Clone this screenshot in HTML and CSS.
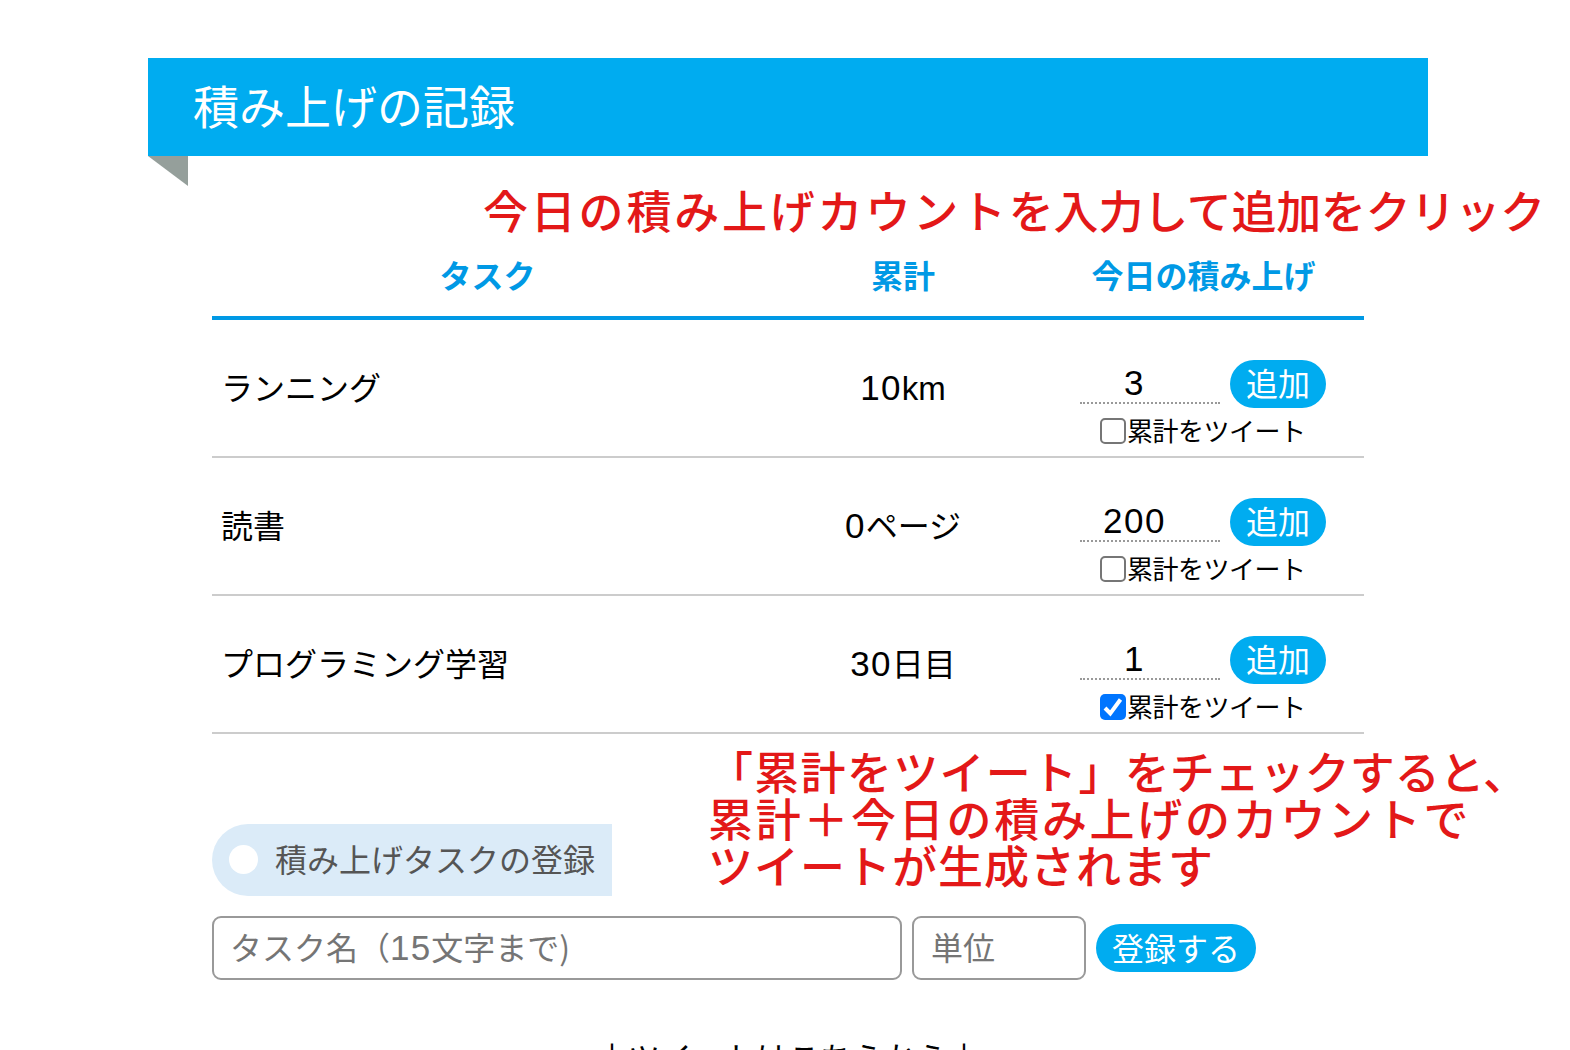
FILE: index.html
```html
<!DOCTYPE html>
<html lang="ja">
<head>
<meta charset="utf-8">
<title>積み上げの記録</title>
<link rel="stylesheet" href="styles.css">
</head>
<body>
<main class="page">
  <h1 class="banner">積み上げの記録</h1>
  <div class="content">
    <table class="tasks">
      <thead>
        <tr><th class="col-task">タスク</th><th class="col-total">累計</th><th class="col-today">今日の積み上げ</th></tr>
      </thead>
      <tbody>
        <tr>
          <td class="name">ランニング</td>
          <td class="total"><span class="num">10</span><span class="unit">km</span></td>
          <td class="today">
            <div class="entry"><input class="count" type="text" value="3"><button class="btn">追加</button></div>
            <label class="tweet"><input class="check" type="checkbox">累計をツイート</label>
          </td>
        </tr>
        <tr>
          <td class="name">読書</td>
          <td class="total"><span class="num">0</span>ページ</td>
          <td class="today">
            <div class="entry"><input class="count" type="text" value="200"><button class="btn">追加</button></div>
            <label class="tweet"><input class="check" type="checkbox">累計をツイート</label>
          </td>
        </tr>
        <tr>
          <td class="name">プログラミング学習</td>
          <td class="total"><span class="num">30</span>日目</td>
          <td class="today">
            <div class="entry"><input class="count" type="text" value="1"><button class="btn">追加</button></div>
            <label class="tweet"><span class="checked"><svg viewBox="0 0 26 26" width="26" height="26"><path d="M5 14 L10.3 19.5 L20.5 5.5" fill="none" stroke="#fff" stroke-width="4"/></svg></span>累計をツイート</label>
          </td>
        </tr>
      </tbody>
    </table>
    <h2 class="tag">積み上げタスクの登録</h2>
    <form class="register">
      <div class="field field-name">タスク名（<span class="num">15</span>文字まで)</div>
      <div class="field field-unit">単位</div>
      <button class="btn" type="button">登録する</button>
    </form>
    <p class="more">↓ツイートはこちらから↓</p>
  </div>
  <p class="note note-top"><span class="wide">今日の積み上げカウント</span>を入力して追加をクリック</p>
  <p class="note note-bottom"><span class="line line-1">「累計をツイート」<span class="after">をチェックすると、</span></span><span class="line line-2">累計＋今日の積み上げのカウントで</span><span class="line line-3">ツイートが生成されます</span></p>
</main>
</body>
</html>
```
FILE: styles.css
```css
* { box-sizing: border-box; }
body {
  margin: 0;
  background: #fff;
  color: #000;
  font: 32px/48px "Noto Sans CJK JP", sans-serif;
}
.page {
  position: relative;
  height: 1050px;
  padding: 58px 142px 0 148px;
  overflow: hidden;
}
.banner {
  position: relative;
  height: 98px;
  margin: 0;
  padding-left: 45px;
  background: #00acf0;
  color: #fff;
  font-size: 46px;
  font-weight: 400;
  line-height: 93px;
}
.banner::after {
  content: "";
  position: absolute;
  left: 0;
  top: 100%;
  border-top: 30px solid #959f9b;
  border-left: 40px solid transparent;
}
.content { padding: 80px 64px 0; }
.tasks {
  width: 1152px;
  table-layout: fixed;
  border-collapse: separate;
  border-spacing: 0;
}
th {
  height: 84px;
  padding: 0 0 4px;
  border-bottom: 4px solid #0099e5;
  color: #0099e5;
  font-weight: 700;
}
.col-task { width: 551px; }
.col-total { width: 280px; }
.col-today { width: 321px; }
td {
  height: 138px;
  padding: 0 0 4px;
  border-bottom: 2px solid #ccc;
}
.name { padding-left: 9px; }
.total { text-align: center; }
.num {
  font-family: "Liberation Sans", sans-serif;
  font-size: 35px;
  line-height: 32px;
  letter-spacing: 1.2px;
}
.unit {
  font-family: "Liberation Sans", sans-serif;
  font-size: 33px;
  line-height: 32px;
}
.today { padding: 26px 0 0; }
.entry {
  display: flex;
  gap: 10px;
  margin-left: 37px;
}
.count {
  width: 140px;
  height: 44px;
  padding: 4px 31px 0 0;
  border: 0;
  border-bottom: 2px dotted #999;
  background: none;
  color: #000;
  font: 35px/38px "Liberation Sans", sans-serif;
  letter-spacing: 1.5px;
  text-align: center;
}
.btn {
  height: 48px;
  padding: 0 16px 3px;
  border: 0;
  border-radius: 24px;
  background: #00acf0;
  color: #fff;
  font: 32px/44px "Noto Sans CJK JP", sans-serif;
}
.tweet {
  display: flex;
  align-items: center;
  height: 26px;
  margin: 9px 0 0 57px;
  font-size: 26px;
  line-height: 26px;
  letter-spacing: -0.5px;
}
.check, .checked {
  flex: none;
  width: 26px;
  height: 26px;
  margin: 2px 1px 0 0;
  border: 2px solid #767676;
  border-radius: 5px;
  appearance: none;
}
.checked { border: 0; background: #0075ff; }
.checked svg { display: block; }
.tag {
  display: flex;
  align-items: center;
  width: 400px;
  height: 72px;
  margin: 90px 0 20px;
  padding: 0 0 4px 17px;
  border-radius: 36px 0 0 36px;
  background: #dbebf8;
  color: #555;
  font-size: 32px;
  font-weight: 400;
  white-space: nowrap;
}
.tag::before {
  content: "";
  width: 29px;
  height: 29px;
  margin: 3px 17px 0 0;
  border-radius: 50%;
  background: #fff;
}
.register {
  display: flex;
  align-items: center;
  gap: 10px;
}
.field {
  height: 64px;
  padding-left: 17px;
  border: 2px solid #999;
  border-radius: 9px;
  color: #757575;
  line-height: 56px;
}
.field-name { width: 690px; padding-left: 16px; }
.field-unit { width: 174px; }
.more { margin: 52px 0 0; text-align: center; }
.note {
  position: absolute;
  margin: 0;
  color: #e31818;
  font-size: 45px;
  font-weight: 500;
  line-height: 47px;
  white-space: nowrap;
}
.note-top { left: 483px; top: 186px; letter-spacing: -0.2px; }
.wide { letter-spacing: 2.8px; }
.note-bottom { left: 708px; top: 747px; }
.line { display: block; }
.line-1 { letter-spacing: 1.3px; }
.after { letter-spacing: 0; }
.line-2 { letter-spacing: 2.7px; }
.line-3 { letter-spacing: 1px; }
```
